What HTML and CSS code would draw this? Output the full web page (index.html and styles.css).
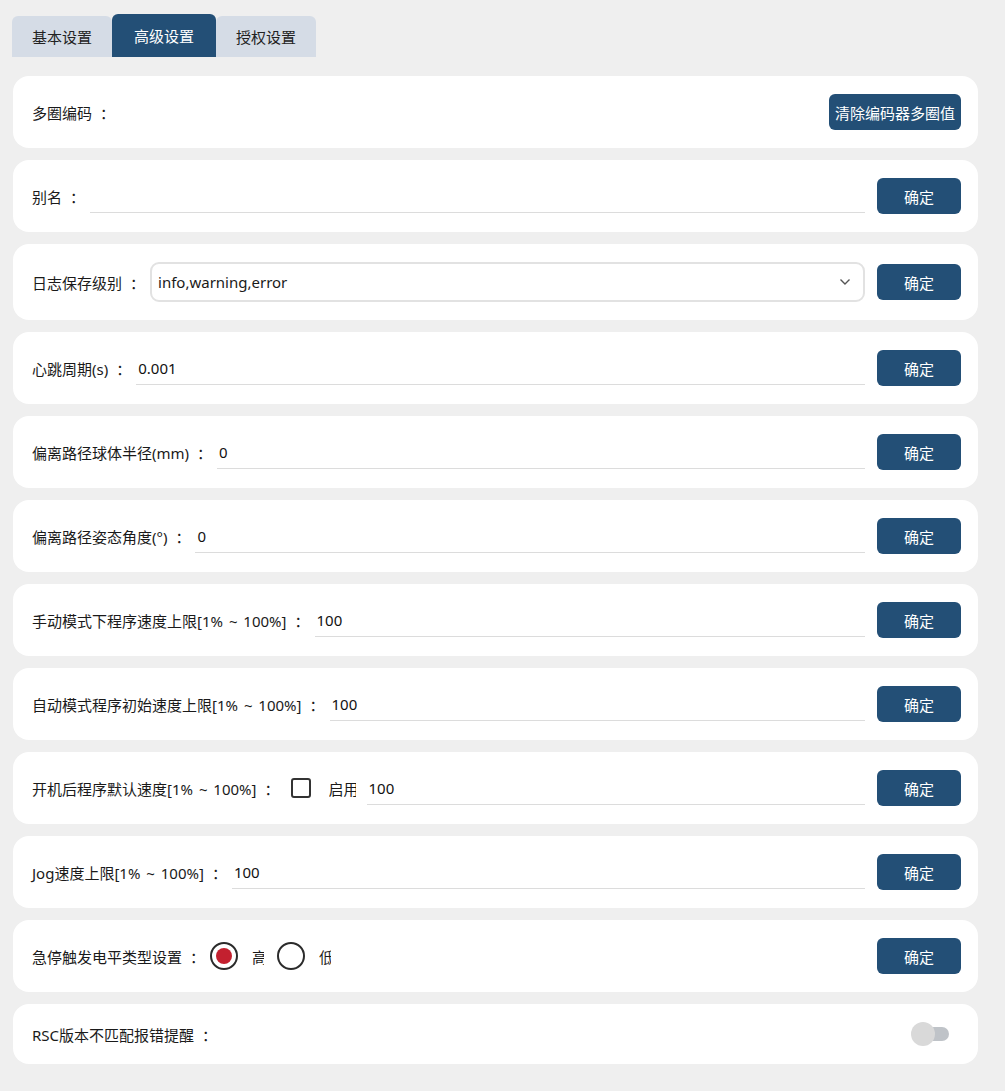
FILE: index.html
```html
<!DOCTYPE html>
<html>
<head>
<meta charset="utf-8">
<meta name="viewport" content="width=device-width, initial-scale=1">
<link rel="stylesheet" href="styles.css">
</head>
<body>

<div class="tabbar">
  <button class="tab">基本设置</button>
  <button class="tab active">高级设置</button>
  <button class="tab">授权设置</button>
</div>

<div class="panel">

  <div class="row">
    <span class="label">多圈编码</span><span class="colon">：</span>
    <span class="fill"></span>
    <button class="btn">清除编码器多圈值</button>
  </div>

  <div class="row">
    <span class="label">别名</span><span class="colon">：</span>
    <input class="field" type="text" value="">
    <button class="btn">确定</button>
  </div>

  <div class="row tall">
    <span class="label">日志保存级别</span><span class="colon">：</span>
    <div class="select">
      <span>info,warning,error</span>
      <svg width="12" height="8" viewBox="0 0 12 8"><path d="M1.5 1.5 L6 6 L10.5 1.5" fill="none" stroke="#555" stroke-width="1.4"/></svg>
    </div>
    <button class="btn">确定</button>
  </div>

  <div class="row">
    <span class="label">心跳周期(s)</span><span class="colon">：</span>
    <input class="field" type="text" value="0.001">
    <button class="btn">确定</button>
  </div>

  <div class="row">
    <span class="label">偏离路径球体半径(mm)</span><span class="colon">：</span>
    <input class="field" type="text" value="0">
    <button class="btn">确定</button>
  </div>

  <div class="row">
    <span class="label">偏离路径姿态角度(°)</span><span class="colon">：</span>
    <input class="field" type="text" value="0">
    <button class="btn">确定</button>
  </div>

  <div class="row">
    <span class="label">手动模式下程序速度上限[1% ~ 100%]</span><span class="colon">：</span>
    <input class="field" type="text" value="100">
    <button class="btn">确定</button>
  </div>

  <div class="row">
    <span class="label">自动模式程序初始速度上限[1% ~ 100%]</span><span class="colon">：</span>
    <input class="field" type="text" value="100">
    <button class="btn">确定</button>
  </div>

  <div class="row">
    <span class="label">开机后程序默认速度[1% ~ 100%]</span><span class="colon">：</span>
    <span class="check"></span>
    <span class="optlabel check-text">启用</span>
    <input class="field" type="text" value="100">
    <button class="btn">确定</button>
  </div>

  <div class="row">
    <span class="label">Jog速度上限[1% ~ 100%]</span><span class="colon">：</span>
    <input class="field" type="text" value="100">
    <button class="btn">确定</button>
  </div>

  <div class="row">
    <span class="label">急停触发电平类型设置</span><span class="colon">：</span>
    <span class="radio on"></span>
    <span class="optlabel">高电平</span>
    <span class="radio"></span>
    <span class="optlabel">低电平</span>
    <span class="fill"></span>
    <button class="btn">确定</button>
  </div>

  <div class="row short">
    <span class="label">RSC版本不匹配报错提醒</span><span class="colon">：</span>
    <span class="fill"></span>
    <span class="switch"><span class="knob"></span></span>
  </div>

</div>

</body>
</html>
```

FILE: styles.css
```css
body {
  margin: 0;
  padding: 14px 27px 14px 12px;
  background-color: #efefef;
  font-family: "Noto Sans", "Noto Sans CJK SC", sans-serif;
  font-size: 15px;
  color: #1a1a1a;
}

/* tab strip */
.tabbar {
  display: flex;
  align-items: flex-end;
  height: 43px;
}

.tab {
  width: 100px;
  height: 41px;
  border: none;
  border-radius: 6px 6px 0 0;
  background-color: #d5dce6;
  color: #222;
  font-family: inherit;
  font-size: 15px;
  padding: 0;
}

.tab.active {
  width: 104px;
  height: 43px;
  background-color: #234f76;
  color: white;
}

.panel {
  margin-top: 19px;
  padding-left: 1px;
  display: flex;
  flex-direction: column;
  gap: 12px;
}

/* one setting per card */
.row {
  display: flex;
  align-items: center;
  height: 72px;
  box-sizing: border-box;
  padding: 0 17px 0 19px;
  background-color: white;
  border-radius: 16px;
}

.row.tall { height: 76px; }
.row.short { height: 60px; padding-right: 29px; }

.label {
  white-space: nowrap;
  word-spacing: 2px;
}

.colon {
  margin-left: 8px;
  margin-right: 5px;
}

.fill { flex: 1; }

.field {
  flex: 1;
  min-width: 0;
  height: 34px;
  margin-right: 12px;
  padding: 0 2px;
  border: none;
  border-bottom: 1px solid #dcdcdc;
  outline: none;
  font-family: inherit;
  font-size: 15px;
  color: #111;
  background: transparent;
  box-sizing: border-box;
}

.select {
  flex: 1;
  height: 40px;
  margin-right: 12px;
  display: flex;
  align-items: center;
  justify-content: space-between;
  padding: 0 12px 0 6px;
  border: 2px solid #e2e2e2;
  border-radius: 9px;
  box-sizing: border-box;
  font-size: 15px;
}

.btn {
  height: 36px;
  min-width: 84px;
  padding: 0 6px;
  border: none;
  border-radius: 6px;
  background-color: #234f76;
  color: white;
  font-family: inherit;
  font-size: 15px;
}

/* checkbox and radios */
.check {
  width: 16px;
  height: 16px;
  border: 2px solid #333;
  border-radius: 3px;
  margin-left: 6px;
}

.optlabel {
  display: inline-block;
  overflow: hidden;
  white-space: nowrap;
  width: 12px;
  margin-left: 14px;
  margin-right: 13px;
}

.check-text {
  width: 27px;
  margin-left: 18px;
  margin-right: 11px;
}

.radio {
  width: 24px;
  height: 24px;
  border: 2px solid #2b2b2b;
  border-radius: 50%;
  position: relative;
}

.radio.on::after {
  content: "";
  position: absolute;
  left: 4px;
  top: 4px;
  width: 16px;
  height: 16px;
  border-radius: 50%;
  background-color: #c3202f;
}

/* toggle switch, off */
.switch {
  position: relative;
  width: 38px;
  height: 24px;
}

.switch::before {
  content: "";
  position: absolute;
  right: 0;
  top: 5px;
  width: 30px;
  height: 14px;
  border-radius: 7px;
  background-color: #bfc3c8;
}

.knob {
  position: absolute;
  left: 0;
  top: 0;
  width: 24px;
  height: 24px;
  border-radius: 50%;
  background-color: #d9d9d9;
}
```
